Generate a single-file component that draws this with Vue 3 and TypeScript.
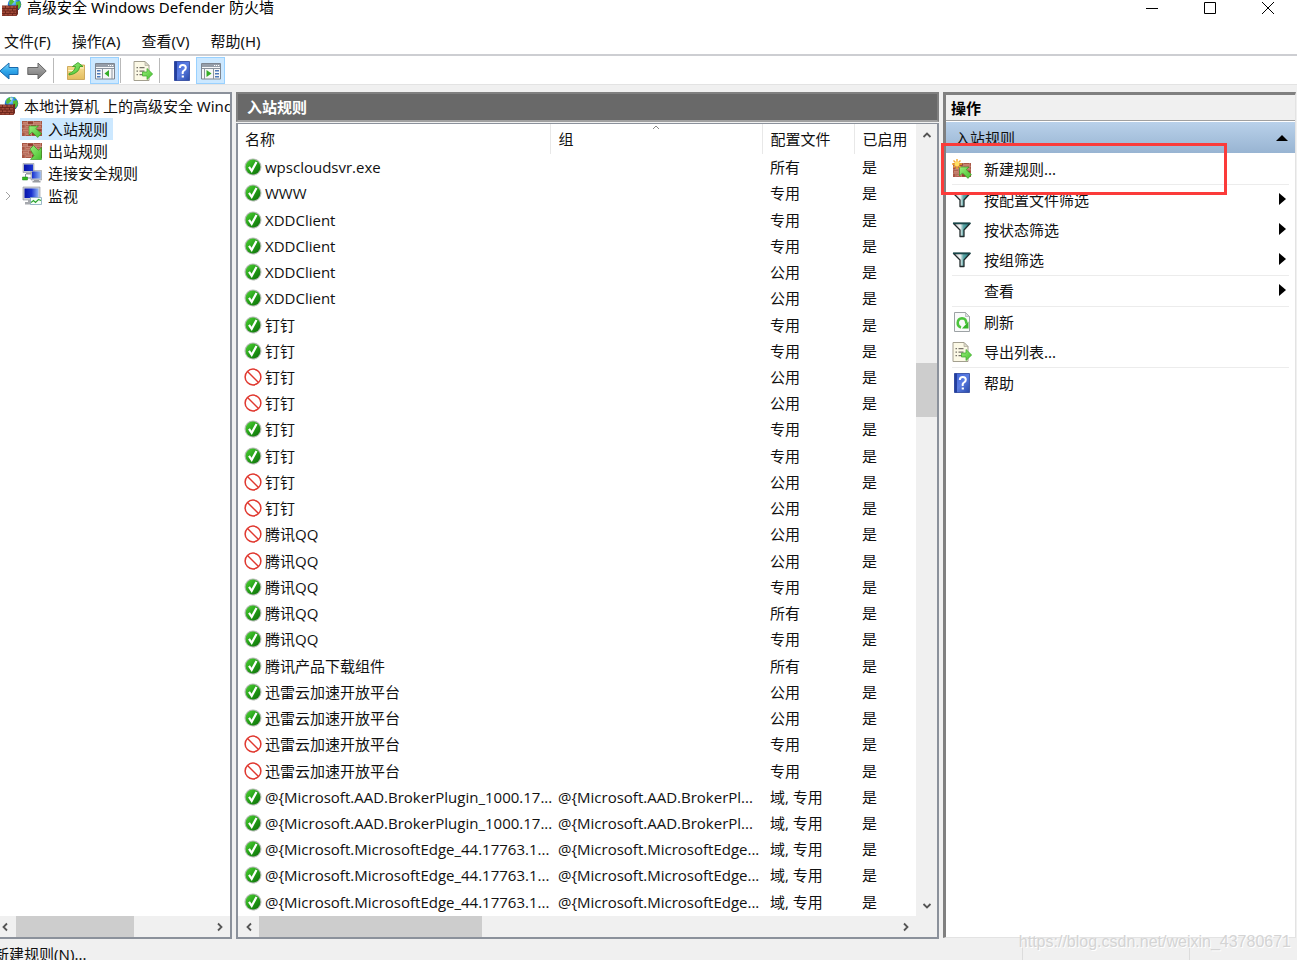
<script setup lang="ts">
import { ref } from 'vue'

interface Rule {
  name: string
  group: string
  profile: string
  allow: boolean
}

interface Action {
  label: string
  icon: string
  submenu?: boolean
  divided?: boolean
}

const menus: string[] = ['文件(F)', '操作(A)', '查看(V)', '帮助(H)']

const tree = [
  { label: '入站规则', icon: 'inbound' },
  { label: '出站规则', icon: 'outbound' },
  { label: '连接安全规则', icon: 'connection' },
  { label: '监视', icon: 'monitor', expandable: true },
]
const selected = ref('入站规则')

const rule = (name: string, profile: string, allow = true, group = ''): Rule => ({ name, group, profile, allow })
const broker = ['@{Microsoft.AAD.BrokerPlugin_1000.17...', '@{Microsoft.AAD.BrokerPl...']
const edge = ['@{Microsoft.MicrosoftEdge_44.17763.1...', '@{Microsoft.MicrosoftEdge...']

const rules: Rule[] = [
  rule('wpscloudsvr.exe', '所有'),
  rule('WWW', '专用'),
  rule('XDDClient', '专用'),
  rule('XDDClient', '专用'),
  rule('XDDClient', '公用'),
  rule('XDDClient', '公用'),
  rule('钉钉', '专用'),
  rule('钉钉', '专用'),
  rule('钉钉', '公用', false),
  rule('钉钉', '公用', false),
  rule('钉钉', '专用'),
  rule('钉钉', '专用'),
  rule('钉钉', '公用', false),
  rule('钉钉', '公用', false),
  rule('腾讯QQ', '公用', false),
  rule('腾讯QQ', '公用', false),
  rule('腾讯QQ', '专用'),
  rule('腾讯QQ', '所有'),
  rule('腾讯QQ', '专用'),
  rule('腾讯产品下载组件', '所有'),
  rule('迅雷云加速开放平台', '公用'),
  rule('迅雷云加速开放平台', '公用'),
  rule('迅雷云加速开放平台', '专用', false),
  rule('迅雷云加速开放平台', '专用', false),
  rule(broker[0], '域, 专用', true, broker[1]),
  rule(broker[0], '域, 专用', true, broker[1]),
  rule(edge[0], '域, 专用', true, edge[1]),
  rule(edge[0], '域, 专用', true, edge[1]),
  rule(edge[0], '域, 专用', true, edge[1]),
]

const actions: Action[] = [
  { label: '新建规则...', icon: 'newrule', divided: true },
  { label: '按配置文件筛选', icon: 'funnel', submenu: true },
  { label: '按状态筛选', icon: 'funnel', submenu: true },
  { label: '按组筛选', icon: 'funnel', submenu: true, divided: true },
  { label: '查看', icon: '', submenu: true, divided: true },
  { label: '刷新', icon: 'refresh' },
  { label: '导出列表...', icon: 'export', divided: true },
  { label: '帮助', icon: 'help' },
]
</script>

<template>
  <div class="window">
    <svg class="sprite" aria-hidden="true">
      <defs>
        <linearGradient id="g-blue" x1="0" y1="0" x2="0" y2="1">
          <stop offset="0" stop-color="#7fd6fb" /><stop offset=".5" stop-color="#2fa6ea" /><stop offset="1" stop-color="#1c80cf" />
        </linearGradient>
        <linearGradient id="g-grey" x1="0" y1="0" x2="0" y2="1">
          <stop offset="0" stop-color="#b4b4b4" /><stop offset="1" stop-color="#747474" />
        </linearGradient>
        <linearGradient id="g-green" x1="0" y1="0" x2="1" y2="1">
          <stop offset="0" stop-color="#9bee7c" /><stop offset="1" stop-color="#44c02c" />
        </linearGradient>
        <linearGradient id="g-ok" x1="0" y1="0" x2="1" y2="1">
          <stop offset="0" stop-color="#4fd336" /><stop offset=".5" stop-color="#25a018" /><stop offset="1" stop-color="#0a6a07" />
        </linearGradient>
        <linearGradient id="g-folder" x1="0" y1="0" x2="0" y2="1">
          <stop offset="0" stop-color="#f8df94" /><stop offset="1" stop-color="#e3bd5e" />
        </linearGradient>
        <linearGradient id="g-help" x1="0" y1="0" x2="1" y2="1">
          <stop offset="0" stop-color="#3d62d8" /><stop offset=".5" stop-color="#5b7de2" /><stop offset="1" stop-color="#2748a8" />
        </linearGradient>
        <linearGradient id="g-screen" x1="0" y1="0" x2="1" y2="0">
          <stop offset="0" stop-color="#0713a8" /><stop offset=".5" stop-color="#1a34d0" /><stop offset="1" stop-color="#8fb4f5" />
        </linearGradient>
        <linearGradient id="g-funnel" x1="0" y1="0" x2="1" y2="0">
          <stop offset="0" stop-color="#b4bdbd" /><stop offset=".4" stop-color="#f5f6f6" /><stop offset=".6" stop-color="#5fa8a8" /><stop offset="1" stop-color="#087a7c" />
        </linearGradient>
        <radialGradient id="g-globe" cx=".4" cy=".3" r=".8">
          <stop offset="0" stop-color="#8bdcff" /><stop offset=".5" stop-color="#1d78d6" /><stop offset="1" stop-color="#123c9c" />
        </radialGradient>
      </defs>
      <symbol id="bricks" viewBox="0 0 20 16" preserveAspectRatio="none">
        <path fill="#a85644" d="M0 0h20v16H0z" />
        <path fill="#c98270" d="M1 1h4v2H1zM12 1h6v2h-6zM4 5h4v2H4zM15 5h4v2h-4zM1 9h5v2H1zM10 9h3v2h-3zM4 13h5v2H4zM15 13h4v2h-4z" />
        <path fill="#8f3c2e" d="M6 1h5v2H6zM9 5h5v2H9zM14 9h5v2h-5zM10 13h4v2h-4z" />
        <path fill="none" stroke="#d6a898" stroke-width=".6" d="M0 3.8h20M0 7.8h20M0 11.8h20M5.5 0v4M11.5 0v4M18.5 0v4M3.2 4v4M8.5 4v4M14.5 4v4M6.5 8v4M13.5 8v4M3.2 12v4M9.5 12v4M14.5 12v4" />
      </symbol>
      <symbol id="firewall" viewBox="0 0 20 20">
        <circle cx="12.5" cy="7.5" r="6.7" fill="url(#g-globe)" />
        <path fill="#55be38" d="M8 3q3-3 5-1l-1 3-3 3-2-1zM14 5l4-1 1 4-2 4-3-2zM15 1l2 1-2 1z" />
        <path fill="#dff5ff" opacity=".8" d="M11 1.5l3 .3-1 2.5-2-.6z" />
        <path fill="#70291f" d="M0 8.5h14.5l1.5-1V17l-1.5 2H0z" />
        <path fill="#a34b39" d="M0 9h14v9.5H0z" />
        <path fill="none" stroke="#642118" stroke-width=".8" d="M0 11.5h14M0 14h14M0 16.5h14M3.5 9v2.5M8 9v2.5M12 9v2.5M2 11.5V14M6 11.5V14M10.5 11.5V14M3.5 14v2.5M8 14v2.5M12 14v2.5M2 16.5v2M6 16.5v2M10.5 16.5v2" />
      </symbol>
      <symbol id="inbound" viewBox="0 0 20 18">
        <use href="#bricks" y="1" width="20" height="15" />
        <path fill="url(#g-green)" stroke="#2b8d1b" stroke-width=".6" d="M7 6h9.500l-2.800 2.600 5.800 5-3.800 3.900-5.500-5.500-3.200 3z" />
      </symbol>
      <symbol id="outbound" viewBox="0 0 20 18">
        <use href="#bricks" y="1" width="20" height="15" />
        <path fill="url(#g-green)" stroke="#2b8d1b" stroke-width=".6" d="M8 7l3.500-3.500 4.800 4.800 3.200-2.800v12h-11l3.500-4z" />
      </symbol>
      <symbol id="newrule" viewBox="0 0 20 20">
        <use href="#bricks" x="1" y="4" width="18" height="14" />
        <path fill="url(#g-green)" stroke="#2b8d1b" stroke-width=".6" d="M7.500 8H17l-2.800 2.600 5.200 5-3.400 3.800-5.500-5.500-3 3z" />
        <path fill="none" stroke="#f4a72c" stroke-width="1.4" d="M5 0v10M0 5h10M1.5 1.5l7 7M8.5 1.5l-7 7" />
        <circle cx="5" cy="5" r="2.4" fill="#ffe062" />
      </symbol>
      <symbol id="connection" viewBox="0 0 20 20">
        <path fill="#c7cbd2" stroke="#858b96" stroke-width=".5" d="M1 .5h11v9H1zM9 7.500h10.700v9.500H9z" />
        <path fill="url(#g-screen)" d="M2 1.500h9v6.500H2zM10 8.500h8.700v7H10z" />
        <path fill="#9a9da3" d="M4 10h5v1.500H4zM12 17h5v1h1.500v1.500h-8V18H12z" />
        <path fill="none" stroke="#8590a8" d="M3.500 11v4M5 15h4" />
        <path fill="#32b820" stroke="#188310" stroke-width=".5" d="M.5 14h5v3h-5z" />
      </symbol>
      <symbol id="monitor" viewBox="0 0 20 20">
        <path fill="#cdd0d6" stroke="#898f98" stroke-width=".6" d="M1 1h17v13H1z" />
        <path fill="url(#g-screen)" d="M2.500 2.500h14v9.500h-14z" />
        <path fill="#a5a8ad" d="M6 14h6v2H6zM3 16h10v2.500H3z" />
        <path fill="#f6fff8" stroke="#83a6bd" stroke-width=".8" d="M8.500 11.500h11v7h-11z" />
        <path fill="none" stroke="#2ea531" stroke-width="1.100" d="M9 16.500l2.500-2 2 2 3-3 2.500 1" />
      </symbol>
      <symbol id="back" viewBox="0 0 20 18">
        <path fill="url(#g-blue)" stroke="#1769ad" stroke-linejoin="round" d="M.8 9L10 1v4.500h9v7h-9V17z" />
      </symbol>
      <symbol id="forward" viewBox="0 0 20 18">
        <path fill="url(#g-grey)" stroke="#666" stroke-linejoin="round" d="M19.200 9L11 1v4.500H.800v7H11V17z" />
      </symbol>
      <symbol id="folder" viewBox="0 0 20 20">
        <path fill="url(#g-folder)" stroke="#c49a45" stroke-width=".8" d="M1.500 5.500h7l2-1.500h8v14.500h-17z" />
        <path fill="#fff6d0" d="M2.300 9h8l2-2.500h5.500v1h-5l-2 2.500H2.300z" />
        <path fill="url(#g-green)" stroke="#319b20" stroke-width=".8" d="M3 12.500Q8.500 11 9.500 5.500H6.500L12 1.500l5 4h-3.200Q13 12.500 3 14z" />
      </symbol>
      <symbol id="pane-left" viewBox="0 0 20 18">
        <path fill="#f6f7f8" stroke="#7d8590" d="M.5 1.500h19v15.500H.500z" />
        <path fill="#969ea9" d="M1 2h18v3H1z" />
        <path fill="#fff" d="M13 3h1.200v1H13zM15 3h1.200v1H15zM17 3h1.200v1H17z" />
        <path fill="none" stroke="#8c949e" d="M1 6.500h18M7.500 6.500V17M17 6.500V17" />
        <path fill="#4d79b8" d="M2 8h3.500v1.500H2zM2 11h3.500v1.500H2zM2 14h3.500v1.500H2z" />
        <path fill="#35ad26" d="M14 8v7l-4.500-3.500z" />
      </symbol>
      <symbol id="pane-right" viewBox="0 0 20 18">
        <path fill="#f6f7f8" stroke="#7d8590" d="M.5 1.500h19v15.500H.500z" />
        <path fill="#969ea9" d="M1 2h18v3H1z" />
        <path fill="#fff" d="M13 3h1.200v1H13zM15 3h1.200v1H15zM17 3h1.200v1H17z" />
        <path fill="none" stroke="#8c949e" d="M1 6.500h18M3.500 6.500V17M12.500 6.500V17" />
        <path fill="#4d79b8" d="M14 8h4v1.500h-4zM14 11h4v1.500h-4zM14 14h4v1.500h-4z" />
        <path fill="#35ad26" d="M5.500 8v7l5-3.500z" />
      </symbol>
      <symbol id="export" viewBox="0 0 20 20">
        <path fill="#fcf9e6" stroke="#a39f8f" d="M1 .500h11l4 4v15H1z" />
        <path fill="#dedbcc" stroke="#a39f8f" stroke-width=".6" d="M12 .500v4h4z" />
        <path fill="#77736a" d="M3.500 6H5v1.300H3.500zM3.500 9.500H5v1.300H3.500zM3.500 13H5v1.300H3.500zM6.500 6h5v1.200h-5zM6.500 9.500h5v1.200h-5zM6.500 13h5v1.200h-5z" />
        <path fill="url(#g-green)" stroke="#39a828" stroke-width=".7" d="M9.500 11H14V7.500l5.700 5.500-5.700 5.500V15H9.500z" />
      </symbol>
      <symbol id="help" viewBox="0 0 18 20">
        <path fill="url(#g-help)" stroke="#2a429b" stroke-width=".8" d="M1.500.500h15v19h-15z" />
        <path fill="#243f9d" d="M1.500.500H4v19H1.500z" />
        <path fill="none" stroke="#fff" stroke-width="2" d="M6.800 7Q6.800 4 9.800 4T12.800 6.800Q12.800 8.500 11 9.500T9.800 13" />
        <path fill="#fff" d="M8.700 14.500h2.200v2H8.700z" />
      </symbol>
      <symbol id="refresh" viewBox="0 0 18 20">
        <path fill="#f9fafa" stroke="#9da2a5" d="M1.500.500h11l4 4v15h-15z" />
        <path fill="#dcdfe0" stroke="#9da2a5" stroke-width=".6" d="M12.500.500v4h4z" />
        <path fill="none" stroke="#4cc43c" stroke-width="2.500" d="M8 15.500Q4.500 14.500 4.700 10.800 5 6.500 9 6.300q4.500.2 4.300 5.500" />
        <path fill="#38b52b" d="M15.500 9.500v7H9z" />
      </symbol>
      <symbol id="funnel" viewBox="0 0 20 18">
        <path fill="url(#g-funnel)" stroke="#222b2d" stroke-width="1.300" stroke-linejoin="round" d="M1.500 2.500h16.500l-6 6.500v6.500H8V9z" />
        <path fill="#17484a" d="M1 1.500h17.500v1.500H1z" />
      </symbol>
      <symbol id="allow" viewBox="0 0 18 18">
        <circle cx="9" cy="9" r="8.500" fill="#b4bbb4" />
        <circle cx="9" cy="9" r="7.400" fill="url(#g-ok)" />
        <path fill="none" stroke="#fff" stroke-width="2.200" d="M5 8.800l2.700 4L12.500 4" />
      </symbol>
      <symbol id="block" viewBox="0 0 18 18">
        <circle cx="9" cy="9" r="7.900" fill="#fff" stroke="#e0382f" stroke-width="1.500" />
        <path stroke="#e0382f" stroke-width="1.500" d="M3.500 3.500l11 11" />
      </symbol>
      <symbol id="chevron" viewBox="0 0 10 10">
        <path fill="none" stroke="#555" stroke-width="1.800" d="M3 1.500L6.500 5 3 8.500" />
      </symbol>
    </svg>

    <header class="titlebar">
      <svg class="app-icon"><use href="#firewall" /></svg>
      <h1>高级安全 Windows Defender 防火墙</h1>
      <button class="caption" aria-label="最小化"><svg viewBox="0 0 12 12"><path d="M0 6.500h12" /></svg></button>
      <button class="caption" aria-label="最大化"><svg viewBox="0 0 12 12"><path d="M.5.500h11v11H.500z" /></svg></button>
      <button class="caption" aria-label="关闭"><svg viewBox="0 0 12 12"><path d="M0 0l12 12M12 0L0 12" /></svg></button>
    </header>

    <nav class="menubar">
      <button v-for="menu in menus" :key="menu">{{ menu }}</button>
    </nav>

    <div class="toolbar">
      <button aria-label="后退"><svg><use href="#back" /></svg></button>
      <button aria-label="前进"><svg><use href="#forward" /></svg></button>
      <span class="rule"></span>
      <button class="wide" aria-label="上一级"><svg><use href="#folder" /></svg></button>
      <button class="wide on" aria-label="控制台树"><svg><use href="#pane-left" /></svg></button>
      <span class="rule near"></span>
      <button class="wide" aria-label="导出列表"><svg><use href="#export" /></svg></button>
      <span class="rule after"></span>
      <button class="wide" aria-label="帮助"><svg><use href="#help" /></svg></button>
      <button class="wide on" aria-label="操作窗格"><svg><use href="#pane-right" /></svg></button>
    </div>

    <main class="panes">
      <aside class="tree-pane">
        <ul class="tree">
          <li class="root">
            <button><svg><use href="#firewall" /></svg><span>本地计算机 上的高级安全 Wind</span></button>
          </li>
          <li v-for="node in tree" :key="node.label">
            <span class="expander"><svg v-if="node.expandable" viewBox="0 0 10 10"><path d="M3 1l4 4-4 4" /></svg></span>
            <button :class="{ selected: selected === node.label }" @click="selected = node.label">
              <svg><use :href="'#' + node.icon" /></svg>{{ node.label }}
            </button>
          </li>
        </ul>
        <div class="hbar tree-bar">
          <button class="left" aria-label="向左滚动"><svg><use href="#chevron" /></svg></button>
          <span class="track"><i class="thumb"></i></span>
          <button aria-label="向右滚动"><svg><use href="#chevron" /></svg></button>
        </div>
      </aside>

      <section class="list-pane">
        <h2>入站规则</h2>
        <div class="list-box">
          <div class="table-area">
            <table>
              <colgroup><col /><col class="c-group" /><col class="c-profile" /><col class="c-enabled" /></colgroup>
              <thead>
                <tr>
                  <th>名称</th>
                  <th class="sorted">组<svg viewBox="0 0 8 5"><path d="M1 4l3-3 3 3" /></svg></th>
                  <th>配置文件</th>
                  <th>已启用</th>
                </tr>
              </thead>
              <tbody>
                <tr v-for="(item, i) in rules" :key="i">
                  <td>
                    <div class="name"><svg><use :href="item.allow ? '#allow' : '#block'" /></svg><span>{{ item.name }}</span></div>
                  </td>
                  <td>{{ item.group }}</td>
                  <td>{{ item.profile }}</td>
                  <td>是</td>
                </tr>
              </tbody>
            </table>
          </div>
          <div class="vbar">
            <button class="up" aria-label="向上滚动"><svg><use href="#chevron" /></svg></button>
            <span class="track"><i class="thumb"></i></span>
            <button class="down" aria-label="向下滚动"><svg><use href="#chevron" /></svg></button>
          </div>
          <div class="hbar">
            <button class="left" aria-label="向左滚动"><svg><use href="#chevron" /></svg></button>
            <span class="track"><i class="thumb"></i></span>
            <button aria-label="向右滚动"><svg><use href="#chevron" /></svg></button>
          </div>
        </div>
      </section>

      <aside class="action-pane">
        <h2>操作</h2>
        <button class="section">入站规则<svg viewBox="0 0 12 6"><path d="M0 6l6-6 6 6z" /></svg></button>
        <ul>
          <li v-for="action in actions" :key="action.label" :class="{ divided: action.divided }">
            <button>
              <span class="slot"><svg v-if="action.icon"><use :href="'#' + action.icon" /></svg></span>
              {{ action.label }}
              <svg v-if="action.submenu" class="more" viewBox="0 0 7 12"><path d="M0 0l7 6-7 6z" /></svg>
            </button>
          </li>
        </ul>
        <div class="callout"></div>
      </aside>
    </main>

    <footer class="statusbar">
      <span class="message">新建规则(N)...</span>
      <span class="cell"></span>
      <span class="cell small"></span>
      <span class="watermark">https://blog.csdn.net/weixin_43780671</span>
    </footer>
  </div>
</template>

<style>
body {
  margin: 0;
  overflow: hidden;
}
</style>

<style scoped>
.window {
  display: flex;
  flex-direction: column;
  height: 100vh;
  overflow: hidden;
  background: #f0f0f0;
  color: #111;
  font: 15px/20px "Noto Sans", "Noto Sans CJK SC", sans-serif;
}
.sprite {
  position: absolute;
  width: 0;
  height: 0;
}
button {
  margin: 0;
  padding: 0;
  border: 0;
  background: none;
  color: inherit;
  font: inherit;
  text-align: left;
  white-space: nowrap;
}
h1,
h2 {
  margin: 0;
  font-size: 15px;
  line-height: 20px;
}
ul {
  margin: 0;
  padding: 0;
  list-style: none;
}
svg {
  display: block;
  flex: none;
}
.titlebar {
  display: flex;
  flex: none;
  align-items: flex-start;
  height: 27px;
  background: #fff;
}
.app-icon {
  width: 20px;
  height: 20px;
  margin: -3px 5px 0 2px;
}
h1 {
  flex: 1;
  margin-top: -3px;
  font-weight: 400;
  color: #000;
}
.caption {
  display: flex;
  justify-content: center;
  width: 58px;
  height: 16px;
  padding-top: 2px;
}
.caption svg {
  width: 12px;
  height: 12px;
  overflow: visible;
  fill: none;
  stroke: #000;
}
.menubar {
  display: flex;
  flex: none;
  gap: 21px;
  height: 27px;
  padding-left: 4px;
  background: #fff;
  border-bottom: 2px solid #cdced2;
}
.toolbar {
  display: flex;
  flex: none;
  align-items: flex-end;
  height: 28px;
  background: #fff;
  border-bottom: 1px solid #e3e3e3;
}
.toolbar button {
  display: flex;
  align-items: center;
  justify-content: center;
  width: 28px;
  height: 27px;
}
.toolbar button:first-child {
  width: 18px;
}
.toolbar button:nth-child(2) {
  width: 38px;
}
.toolbar .wide {
  width: 29px;
}
.toolbar .on {
  box-sizing: border-box;
  background: #cce8ff;
  border: 1px solid #99d1ff;
}
.toolbar svg {
  width: 20px;
  height: 20px;
}
.rule {
  width: 1px;
  height: 25px;
  margin: 0 7px 1px -3px;
  background: #b9b9b9;
}
.rule.near {
  margin: 0 7px 1px 1px;
}
.rule.after {
  margin: 0 7px 1px 2px;
}
.panes {
  display: flex;
  flex: 1;
  min-height: 0;
  padding-top: 7px;
}
.tree-pane {
  display: flex;
  flex: none;
  flex-direction: column;
  box-sizing: border-box;
  width: 232px;
  margin-right: 4px;
  overflow: hidden;
  background: #fff;
  border: solid #8b919b;
  border-width: 2px 2px 2px 0;
}
.tree {
  display: grid;
  flex: 1;
  grid-auto-rows: 1fr;
  max-height: 112px;
  margin-top: 1px;
  margin-bottom: auto;
}
.tree li {
  display: flex;
  align-items: center;
  min-width: 0;
}
.tree button {
  display: flex;
  align-items: center;
  gap: 6px;
  height: 22px;
  padding: 0 5px 0 2px;
}
.tree .root button {
  gap: 5px;
  padding: 0;
  margin-left: -1px;
}
.tree button svg {
  width: 20px;
  height: 20px;
}
.tree .selected {
  background: #cce8ff;
}
.expander {
  width: 20px;
}
.expander svg {
  width: 10px;
  height: 10px;
  margin-left: 3px;
  fill: none;
  stroke: #a0a0a0;
}
.hbar,
.vbar {
  display: flex;
  background: #f0f0f0;
}
.hbar {
  height: 21px;
}
.vbar {
  flex-direction: column;
  width: 21px;
}
.hbar button,
.vbar button {
  display: flex;
  flex: none;
  align-items: center;
  justify-content: center;
  width: 21px;
  height: 21px;
}
.hbar svg,
.vbar svg {
  width: 10px;
  height: 10px;
}
.left svg {
  transform: rotate(180deg);
}
.up svg {
  transform: rotate(-90deg);
}
.down svg {
  transform: rotate(90deg);
}
.track {
  display: flex;
  flex: 1;
}
.track .thumb {
  width: 35%;
  background: #cdcdcd;
}
.tree-bar .left {
  width: 16px;
  justify-content: flex-start;
}
.tree-bar .track .thumb {
  width: 61%;
}
.vbar .track {
  flex-direction: column;
}
.vbar .track::before {
  flex: 218;
  content: "";
}
.vbar .track::after {
  flex: 477;
  content: "";
}
.vbar .track .thumb {
  flex: 54;
  width: auto;
}
.list-pane {
  display: flex;
  flex: 1;
  flex-direction: column;
  gap: 1px;
  min-width: 0;
  margin-right: 4px;
}
.list-pane h2 {
  padding: 3px 9px;
  background: #696969;
  border: 2px solid #808080;
  border-bottom-color: #a0a0a0;
  color: #fff;
}
.list-box {
  display: grid;
  flex: 1;
  grid-template: minmax(0, 1fr) 21px / minmax(0, 1fr) 21px;
  min-height: 0;
  background: #f0f0f0;
  border: 2px solid #8b919b;
  border-top-width: 1px;
}
.table-area {
  padding-bottom: 1px;
  background: #fff;
  overflow: hidden;
}
table {
  width: 100%;
  height: 100%;
  table-layout: fixed;
  border-collapse: collapse;
  font-family: "Open Sans", "Noto Sans CJK SC", sans-serif;
}
.c-group {
  width: 212px;
}
.c-profile {
  width: 92px;
}
.c-enabled {
  width: 62px;
}
th,
td {
  padding: 0 0 0 8px;
  font-weight: 400;
  text-align: left;
  white-space: nowrap;
}
th {
  height: 30px;
  border-left: 1px solid #e8e8e8;
}
th:first-child {
  padding-left: 7px;
  border-left: 0;
}
td:first-child {
  padding: 0 0 0 6px;
}
.sorted {
  position: relative;
}
.sorted svg {
  position: absolute;
  top: 1px;
  left: 48%;
  width: 8px;
  height: 5px;
  fill: none;
  stroke: #888;
}
.name {
  display: flex;
  align-items: center;
  gap: 3px;
}
.name svg {
  width: 18px;
  height: 18px;
}
.action-pane {
  position: relative;
  flex: none;
  box-sizing: border-box;
  width: 353px;
  margin: 0 1px 1px 0;
  background: #fff;
  border: solid #808080;
  border-width: 3px 1px 1px 3px;
  border-right-color: #e3e3e3;
  border-bottom-color: #e3e3e3;
}
.action-pane h2 {
  padding: 3px 5px 2px;
  background: #f0f0f0;
  border-bottom: 1px solid #a0a0a0;
  color: #000;
}
.section {
  display: flex;
  align-items: center;
  justify-content: space-between;
  width: 100%;
  height: 32px;
  padding: 0 7px 0 9px;
  background: linear-gradient(#b9d1ea, #98b4d2);
  border-top: 1px solid #fff;
}
.section svg {
  width: 12px;
  height: 6px;
}
.action-pane ul {
  padding-top: 1px;
}
.action-pane li {
  margin: 0 6px;
}
.divided {
  border-bottom: 1px solid #ececec;
}
.action-pane li button {
  display: flex;
  align-items: center;
  width: 100%;
  height: 30px;
}
.slot {
  width: 32px;
}
.slot svg {
  width: 20px;
  height: 20px;
}
.more {
  width: 7px;
  height: 12px;
  margin: 0 3px 2px auto;
}
.callout {
  position: absolute;
  top: 48px;
  left: -5px;
  width: 280px;
  height: 46px;
  border: 3px solid #fb3b3a;
}
.statusbar {
  position: relative;
  display: flex;
  flex: none;
  height: 21px;
}
.message {
  flex: 1;
  padding-top: 5px;
  text-indent: -6px;
  white-space: nowrap;
}
.cell {
  width: 166px;
  border-left: 1px solid #dcdcdc;
}
.cell.small {
  width: 107px;
}
.watermark {
  position: absolute;
  right: 6px;
  bottom: 8px;
  color: #d4d4d4;
  font: 16px/20px "Liberation Sans", sans-serif;
  text-shadow: 1px 1px 0 #fff;
}
</style>
